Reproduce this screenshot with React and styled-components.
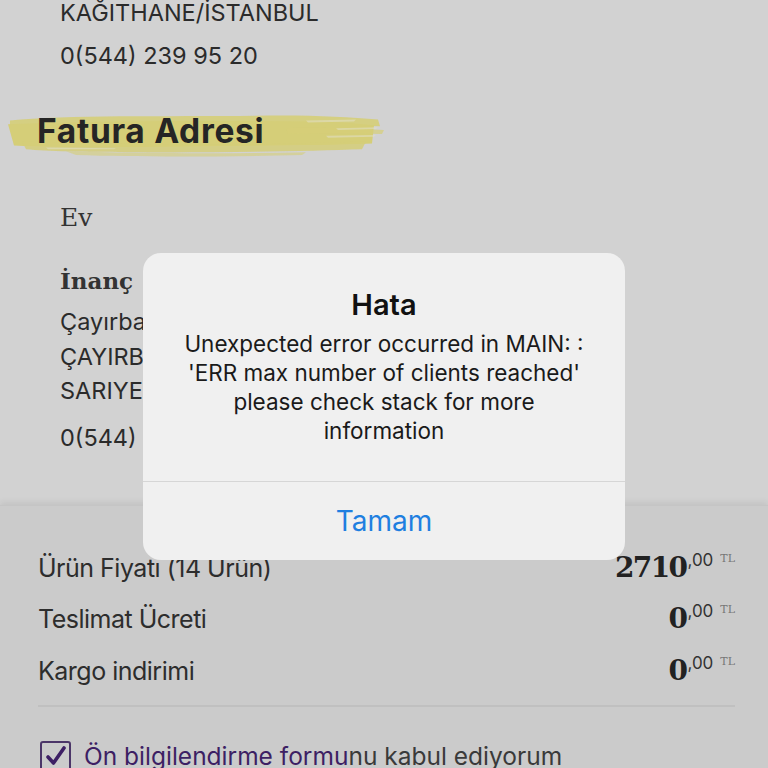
import React from "react";
import styled, { createGlobalStyle } from "styled-components";

const Global = createGlobalStyle`
  html, body { margin: 0; padding: 0; background: #cbcbcb; }
  body { font-family: Inter, "Noto Sans", sans-serif; }
  * { box-sizing: border-box; }
`;

const Page = styled.div`
  position: relative;
  width: 768px;
  height: 768px;
  overflow: hidden;
  background: #d2d2d2;
  display: flex;
  flex-direction: column;
`;

const Address = styled.div`
  padding: 0 0 0 60px;
  margin-top: ${p => p.$mt || 0}px;
  display: flex;
  flex-direction: column;
  flex-shrink: 0;
`;

const SansLine = styled.div`
  font-family: Inter, "Noto Sans", sans-serif;
  font-size: 23.5px;
  color: #2b2b2b;
  height: ${p => p.$h || 34}px;
  line-height: 30px;
  white-space: nowrap;
`;

const SerifLine = styled.div`
  font-family: "DejaVu Serif", serif;
  font-size: ${p => (p.$bold ? 23 : 25)}px;
  font-weight: ${p => (p.$bold ? 700 : 400)};
  color: #333;
  height: ${p => p.$h || 34}px;
  line-height: 30px;
  white-space: nowrap;
`;

const HeadingWrap = styled.div`
  position: relative;
  flex-shrink: 0;
  height: 56px;
  margin: 28px 0 44px 0;
  display: flex;
  align-items: center;
  padding-left: 37px;
`;

const Brush = styled.svg`
  position: absolute;
  left: 6px;
  top: 4px;
  width: 380px;
  height: 50px;
`;

const Heading = styled.h2`
  position: relative;
  margin: 0;
  font-family: Inter, "Noto Sans", sans-serif;
  font-weight: 700;
  font-size: 33.5px;
  color: #252525;
  letter-spacing: 0.7px;
`;

const Summary = styled.div`
  margin-top: auto;
  flex-shrink: 0;
  height: 263px;
  overflow: hidden;
  background: #cbcbcb;
  box-shadow: 0 -3px 6px rgba(0, 0, 0, 0.07);
  border-top: 1px solid #c5c5c5;
  padding: 36px 33px 0 38px;
  display: flex;
  flex-direction: column;
`;

const Row = styled.div`
  display: flex;
  justify-content: space-between;
  align-items: center;
  height: 51.5px;
  flex-shrink: 0;
`;

const Label = styled.span`
  font-family: Inter, "Noto Sans", sans-serif;
  font-size: 25px;
  letter-spacing: -0.5px;
  color: #2d2d2d;
`;

const Price = styled.span`
  display: flex;
  align-items: flex-start;
  font-family: "DejaVu Serif", serif;
  color: #222;
`;

const Whole = styled.span`
  font-size: 28px;
  font-weight: 700;
  letter-spacing: -1.6px;
  line-height: 34px;
`;

const Cents = styled.span`
  font-family: Inter, sans-serif;
  font-size: 17px;
  line-height: 18px;
  color: #333;
  margin-left: 1px;
`;

const Currency = styled.span`
  font-family: "DejaVu Serif", serif;
  font-size: 11px;
  line-height: 16px;
  color: #777;
  margin-left: 7px;
`;

const Divider = styled.div`
  height: 2px;
  flex-shrink: 0;
  background: #c0c0c0;
  margin-top: 8px;
`;

const Consent = styled.div`
  display: flex;
  align-items: center;
  gap: 13px;
  margin-top: 34px;
  margin-left: 2px;
  flex-shrink: 0;
`;

const Box = styled.div`
  width: 31px;
  height: 31px;
  border: 2px solid #4b3568;
  border-radius: 3px;
  display: flex;
  align-items: center;
  justify-content: center;
  flex-shrink: 0;
`;

const ConsentText = styled.span`
  font-family: Inter, "Noto Sans", sans-serif;
  font-size: 24.5px;
  color: #3a3a3a;
  white-space: nowrap;
`;

const Link = styled.span`
  color: #3d1f64;
`;

const Dialog = styled.div`
  position: absolute;
  left: 143px;
  top: 253px;
  width: 482px;
  height: 307px;
  border-radius: 18px;
  background: #f0f0f0;
  display: flex;
  flex-direction: column;
  overflow: hidden;
`;

const DialogBody = styled.div`
  flex: 1;
  display: flex;
  flex-direction: column;
  align-items: center;
  padding: 34px 12px 0 12px;
  text-align: center;
  border-bottom: 1.5px solid #d6d6d6;
`;

const Title = styled.div`
  font-family: Inter, "Noto Sans", sans-serif;
  font-size: 29px;
  font-weight: 600;
  color: #111;
  line-height: 36px;
`;

const Message = styled.div`
  font-family: Inter, "Noto Sans", sans-serif;
  font-size: 22.5px;
  color: #1a1a1a;
  line-height: 29px;
  margin-top: 6px;
  white-space: nowrap;
`;

const Button = styled.div`
  height: 78px;
  display: flex;
  align-items: center;
  justify-content: center;
  font-family: Inter, "Noto Sans", sans-serif;
  font-size: 28px;
  color: #1f7fe0;
`;

function Amount({ whole }) {
  return (
    <Price>
      <Whole>{whole}</Whole>
      <Cents>,00</Cents>
      <Currency>TL</Currency>
    </Price>
  );
}

export default function App() {
  return (
    <>
      <Global />
      <Page>
        <Address $mt={-2}>
          <SansLine $h={43}>KAĞITHANE/İSTANBUL</SansLine>
          <SansLine>0(544) 239 95 20</SansLine>
        </Address>
        <HeadingWrap>
          <Brush viewBox="0 0 380 52" preserveAspectRatio="none">
            <g fill="#d5ce78">
              <path d="M4 14 C60 8 160 10 250 9 C300 8 340 10 372 13 L374 20 C330 19 300 19 250 20 L4 22 Z" opacity="0.9" />
              <path d="M2 18 C90 14 200 14 300 15 C330 15 350 17 368 19 L366 38 C320 40 250 40 180 41 C110 42 50 42 8 40 Z" />
              <path d="M16 36 C80 38 160 40 240 39 C290 38 330 37 360 36 L356 44 C300 46 200 48 120 47 C80 47 40 46 20 44 Z" opacity="0.85" />
              <path d="M280 22 C310 21 340 22 378 24 L376 28 C340 27 310 27 282 28 Z" opacity="0.7" />
              <path d="M60 46 C130 48 210 49 300 47 L296 50 C210 52 130 52 70 50 Z" opacity="0.6" />
            </g>
            <g fill="#e2e0c8" opacity="0.55">
              <path d="M320 30 L370 29 L368 31 L322 32 Z" />
              <path d="M300 14 L350 13 L348 15 L302 16 Z" />
              <path d="M40 42 L110 43 L108 44 L42 44 Z" />
              <path d="M330 22 L372 21 L370 23 L332 24 Z" />
            </g>
          </Brush>
          <Heading>Fatura Adresi</Heading>
        </HeadingWrap>
        <Address>
          <SerifLine $h={63}>Ev</SerifLine>
          <SerifLine $bold $h={41}>İnanç</SerifLine>
          <SansLine $h={35}>Çayırbaşı</SansLine>
          <SansLine $h={34}>ÇAYIRBAŞI</SansLine>
          <SansLine $h={47}>SARIYER</SansLine>
          <SansLine>0(544) 239 95 20</SansLine>
        </Address>
        <Summary>
          <Row>
            <Label>Ürün Fiyatı (14 Ürün)</Label>
            <Amount whole="2710" />
          </Row>
          <Row>
            <Label>Teslimat Ücreti</Label>
            <Amount whole="0" />
          </Row>
          <Row>
            <Label>Kargo indirimi</Label>
            <Amount whole="0" />
          </Row>
          <Divider />
          <Consent>
            <Box>
              <svg width="22" height="22" viewBox="0 0 22 22">
                <path d="M3 12 L8.5 18 L19 3" fill="none" stroke="#3d1f64" strokeWidth="3.6" strokeLinecap="round" strokeLinejoin="round" />
              </svg>
            </Box>
            <ConsentText>
              <Link>Ön bilgilendirme formu</Link>nu kabul ediyorum
            </ConsentText>
          </Consent>
        </Summary>
        <Dialog>
          <DialogBody>
            <Title>Hata</Title>
            <Message>
              Unexpected error occurred in MAIN: :<br />
              'ERR max number of clients reached'<br />
              please check stack for more<br />
              information
            </Message>
          </DialogBody>
          <Button>Tamam</Button>
        </Dialog>
      </Page>
    </>
  );
}
